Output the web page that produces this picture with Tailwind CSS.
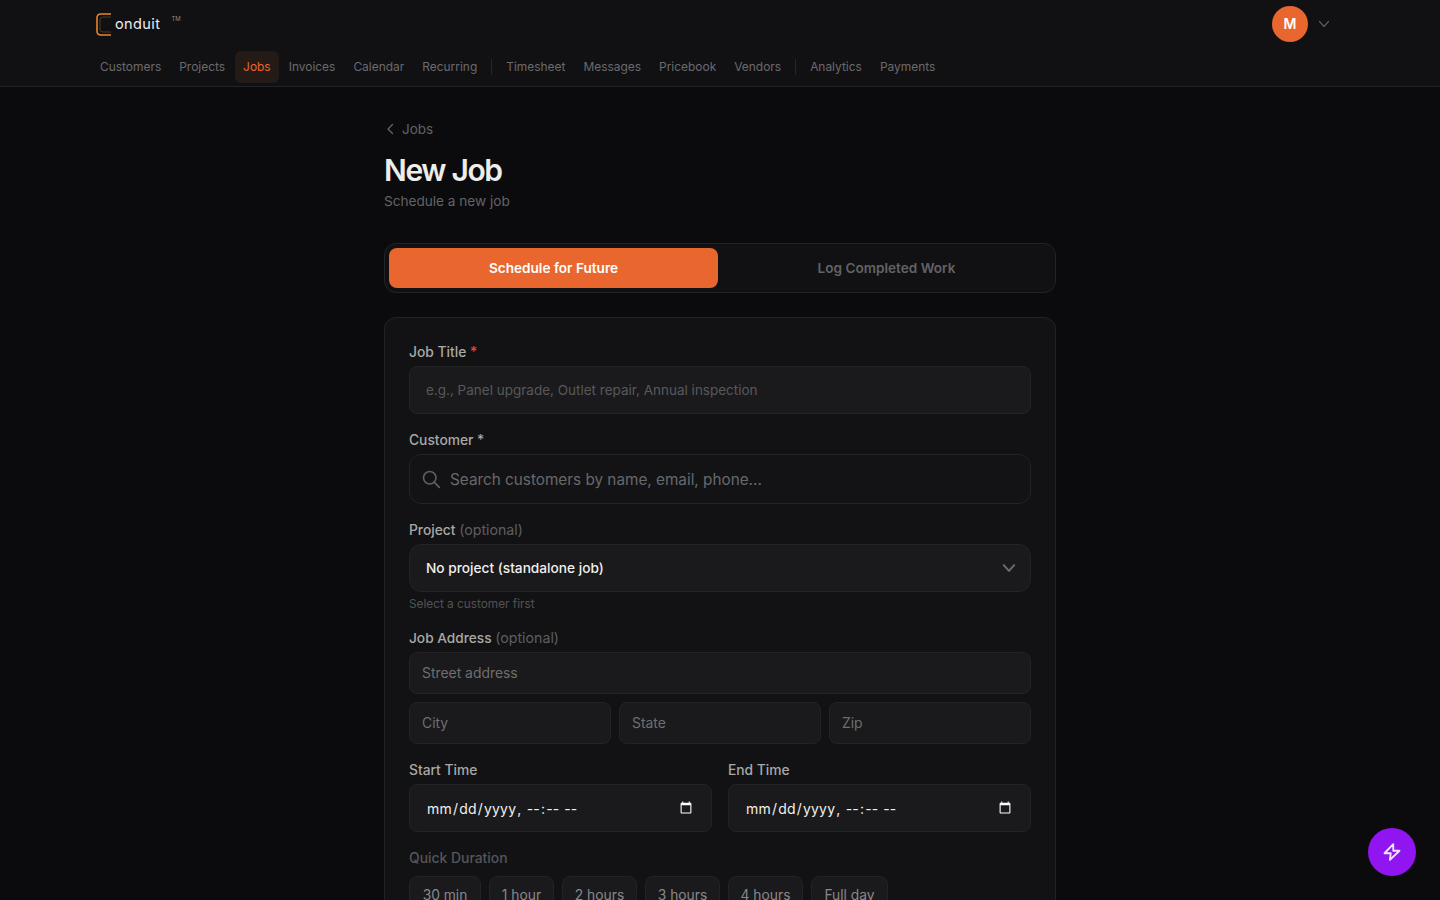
<!DOCTYPE html>
<html lang="en">
<head>
    <meta charset="UTF-8">
    <meta name="viewport" content="width=device-width, initial-scale=1.0">
    <title>New Job - Conduit</title>
    <script src="https://cdn.jsdelivr.net/npm/@tailwindcss/browser@4"></script>
</head>
<body class="bg-[#0b0b0d] text-[#f0f0ee] h-screen overflow-hidden font-['Inter','Noto_Sans',sans-serif]">

<header class="bg-[#111113] border-b border-[#232326] h-[87px]">
    <div class="max-w-7xl mx-auto px-4">
        <div class="flex items-center justify-between h-12">
            <div class="flex items-start">
                <svg width="16" height="23" viewBox="0 0 16 23" fill="none" class="mt-[1px]">
                    <path d="M15 1H5Q1 1 1 5V18Q1 22 5 22H15" stroke="#e8852c" stroke-width="1.6"/>
                    <path d="M15 4H7Q4 4 4 7V16Q4 19 7 19H15" stroke="#4a3a2c" stroke-width="1"/>
                </svg>
                <span class="text-[14.5px] leading-[22px] ml-[3px] mt-[1px] tracking-[0.4px] text-[#eeeeee]">onduit</span>
                <span class="text-[6px] leading-[10px] ml-[11px] mt-[2px] text-[#8a8a8a]">TM</span>
            </div>
            <div class="flex items-center gap-[10px] pr-[14px]">
                <div class="w-9 h-9 rounded-full bg-[#e9672e] flex items-center justify-center text-sm font-semibold text-white">M</div>
                <svg width="12" height="12" viewBox="0 0 24 24" fill="none" stroke="#5c5c5f" stroke-width="2.4" stroke-linecap="round" stroke-linejoin="round"><path d="M3 7l9 10 9-10"/></svg>
            </div>
        </div>
        <nav class="flex items-center gap-[2px] -ml-1 h-[30px] mt-[4px] text-[11.95px] text-[#6a6a6d]">
            <a class="px-2 py-[7px]">Customers</a>
            <a class="px-2 py-[7px]">Projects</a>
            <a class="px-2 py-[7px] rounded-md bg-[#241a16] text-[#e9672e]">Jobs</a>
            <a class="px-2 py-[7px]">Invoices</a>
            <a class="px-2 py-[7px]">Calendar</a>
            <a class="px-2 py-[7px]">Recurring</a>
            <span class="w-px h-4 bg-[#262629] mx-[4px]"></span>
            <a class="px-2 py-[7px]">Timesheet</a>
            <a class="px-2 py-[7px]">Messages</a>
            <a class="px-2 py-[7px]">Pricebook</a>
            <a class="px-2 py-[7px]">Vendors</a>
            <span class="w-px h-4 bg-[#262629] mx-[4px]"></span>
            <a class="px-2 py-[7px]">Analytics</a>
            <a class="px-2 py-[7px]">Payments</a>
        </nav>
    </div>
</header>

<main class="max-w-2xl mx-auto pt-[33px]">
    <a class="flex items-center gap-[8px] pl-[2px] h-[18px] text-[13.5px] text-[#626265]">
        <svg width="8" height="12" viewBox="0 0 8 12" fill="none" stroke="#626265" stroke-width="1.4" stroke-linecap="round" stroke-linejoin="round"><path d="M6.5 1.5L2 6l4.5 4.5"/></svg>
        Jobs
    </a>
    <h1 class="text-[30px] leading-9 font-semibold tracking-[-1.35px] mt-[14px] text-[#ededea]">New Job</h1>
    <p class="text-[13.6px] leading-5 text-[#636366] mt-[3px]">Schedule a new job</p>

    <div class="flex gap-1 p-1 mt-[32px] h-[50px] rounded-xl border border-[#232326] bg-[#111113] text-[13.6px] font-semibold">
        <button class="flex-1 rounded-lg bg-[#e9672e] text-white">Schedule for Future</button>
        <button class="flex-1 rounded-lg text-[#626265]">Log Completed Work</button>
    </div>

    <form class="mt-[24px] rounded-xl border border-[#232326] bg-[#121214] px-6 pt-[24px] pb-6">
        <label class="block text-[13.8px] leading-5 font-medium text-[#a8a8a6]">Job Title <span class="text-[#ef4444]">*</span></label>
        <input placeholder="e.g., Panel upgrade, Outlet repair, Annual inspection" class="block w-full h-12 mt-[4px] px-4 rounded-lg border border-[#232326] bg-[#1a1a1c] text-[13.5px] placeholder:text-[#58585b] outline-none">

        <label class="block mt-[16px] text-[13.8px] leading-5 font-medium text-[#a8a8a6]">Customer *</label>
        <div class="relative mt-[4px]">
            <svg class="absolute left-[12px] top-[15px]" width="20" height="20" viewBox="0 0 24 24" fill="none" stroke="#5e5e61" stroke-width="2" stroke-linecap="round"><circle cx="10.5" cy="10.5" r="7.5"/><path d="M16 16l6 6"/></svg>
            <input placeholder="Search customers by name, email, phone..." class="block w-full h-[50px] pl-10 pr-4 rounded-xl border border-[#232326] bg-[#131315] text-[15.3px] placeholder:text-[#68686b] outline-none">
        </div>

        <label class="block mt-[16px] text-[13.8px] leading-5 font-medium text-[#a8a8a6]">Project <span class="text-[14.2px] font-normal text-[#5e5e61]">(optional)</span></label>
        <div class="relative mt-[4px]">
            <select class="block w-full h-12 px-4 appearance-none rounded-xl border border-[#232326] bg-[#1a1a1c] text-[13.7px] font-medium text-[#f0f0ee] outline-none">
                <option>No project (standalone job)</option>
            </select>
            <svg class="absolute right-[15px] top-[17px]" width="14" height="14" viewBox="0 0 24 24" fill="none" stroke="#6e6e71" stroke-width="3.2" stroke-linecap="round" stroke-linejoin="round"><path d="M3 7l9 10 9-10"/></svg>
        </div>
        <p class="mt-[4px] text-[11.8px] leading-4 text-[#525255]">Select a customer first</p>

        <label class="block mt-[16px] text-[13.7px] leading-5 font-medium text-[#a8a8a6]">Job Address <span class="text-[14.2px] font-normal text-[#5e5e61]">(optional)</span></label>
        <input placeholder="Street address" class="block w-full h-[42px] mt-[4px] px-3 rounded-lg border border-[#232326] bg-[#1a1a1c] text-[13.9px] placeholder:text-[#6e6e71] outline-none">
        <div class="grid grid-cols-3 gap-2 mt-2">
            <input placeholder="City" class="min-w-0 h-[42px] px-3 rounded-lg border border-[#232326] bg-[#1a1a1c] text-[13.9px] placeholder:text-[#6e6e71] outline-none">
            <input placeholder="State" class="min-w-0 h-[42px] px-3 rounded-lg border border-[#232326] bg-[#1a1a1c] text-[13.9px] placeholder:text-[#6e6e71] outline-none">
            <input placeholder="Zip" class="min-w-0 h-[42px] px-3 rounded-lg border border-[#232326] bg-[#1a1a1c] text-[13.9px] placeholder:text-[#6e6e71] outline-none">
        </div>

        <div class="grid grid-cols-2 gap-4 mt-[16px]">
            <div>
                <label class="block text-[13.8px] leading-5 font-medium text-[#a8a8a6]">Start Time</label>
                <input type="datetime-local" class="block w-full h-12 mt-[4px] px-4 rounded-lg border border-[#232326] bg-[#1a1a1c] text-[14px] tracking-[0.2px] text-[#f0f0ee] [color-scheme:dark] outline-none">
            </div>
            <div>
                <label class="block text-[13.8px] leading-5 font-medium text-[#a8a8a6]">End Time</label>
                <input type="datetime-local" class="block w-full h-12 mt-[4px] px-4 rounded-lg border border-[#232326] bg-[#1a1a1c] text-[14px] tracking-[0.2px] text-[#f0f0ee] [color-scheme:dark] outline-none">
            </div>
        </div>

        <p class="mt-[16px] text-[13.9px] leading-5 font-medium text-[#56565a]">Quick Duration</p>
        <div class="flex gap-2 mt-2 text-[13.8px] text-[#88888a]">
            <button type="button" class="w-[72px] h-[38px] rounded-lg border border-[#232326] bg-[#1a1a1c]">30 min</button>
            <button type="button" class="w-[65px] h-[38px] rounded-lg border border-[#232326] bg-[#1a1a1c]">1 hour</button>
            <button type="button" class="w-[75px] h-[38px] rounded-lg border border-[#232326] bg-[#1a1a1c]">2 hours</button>
            <button type="button" class="w-[75px] h-[38px] rounded-lg border border-[#232326] bg-[#1a1a1c]">3 hours</button>
            <button type="button" class="w-[75px] h-[38px] rounded-lg border border-[#232326] bg-[#1a1a1c]">4 hours</button>
            <button type="button" class="w-[77px] h-[38px] rounded-lg border border-[#232326] bg-[#1a1a1c]">Full day</button>
        </div>
    </form>
</main>

<button class="fixed right-6 bottom-6 w-12 h-12 rounded-full bg-[#9015f0] flex items-center justify-center">
    <svg width="20" height="20" viewBox="0 0 24 24" fill="none" stroke="#f3e6ff" stroke-width="2.2" stroke-linejoin="round"><path d="M13.5 2.5L3 13.5h7.5L9.5 21.5 21 10.5h-7.5z"/></svg>
</button>

</body>
</html>
